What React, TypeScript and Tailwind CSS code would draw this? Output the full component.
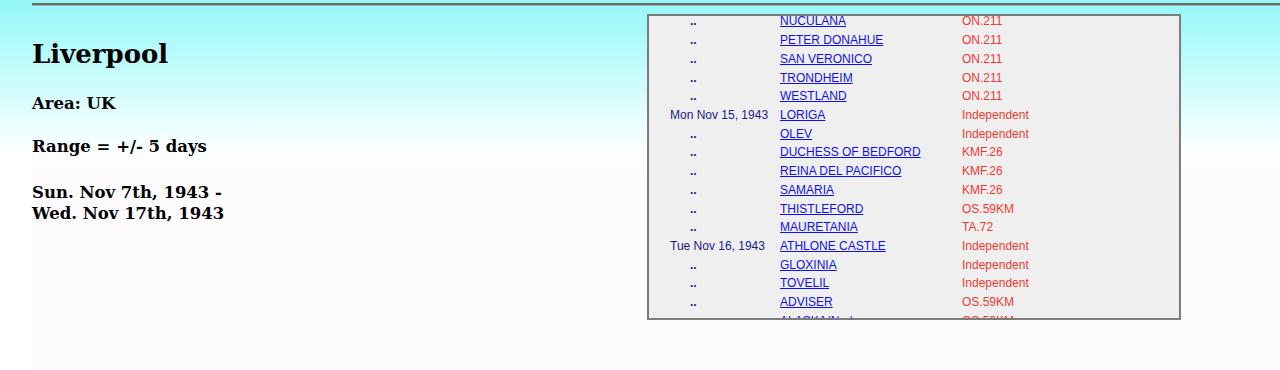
const rows: [string, string, string][] = [
  ["..", "NUCULANA", "ON.211"],
  ["..", "PETER DONAHUE", "ON.211"],
  ["..", "SAN VERONICO", "ON.211"],
  ["..", "TRONDHEIM", "ON.211"],
  ["..", "WESTLAND", "ON.211"],
  ["Mon Nov 15, 1943", "LORIGA", "Independent"],
  ["..", "OLEV", "Independent"],
  ["..", "DUCHESS OF BEDFORD", "KMF.26"],
  ["..", "REINA DEL PACIFICO", "KMF.26"],
  ["..", "SAMARIA", "KMF.26"],
  ["..", "THISTLEFORD", "OS.59KM"],
  ["..", "MAURETANIA", "TA.72"],
  ["Tue Nov 16, 1943", "ATHLONE CASTLE", "Independent"],
  ["..", "GLOXINIA", "Independent"],
  ["..", "TOVELIL", "Independent"],
  ["..", "ADVISER", "OS.59KM"],
  ["..", "ALASKA(Nor)", "OS.59KM"],
];

export default function App() {
  return (
    <div className="min-h-[370px] bg-[linear-gradient(to_bottom,#94f8f9_0px,#ffffff_155px)]">
      <div className="ml-[32px] pt-[3px] min-h-[370px] bg-[linear-gradient(to_bottom,transparent_140px,#fdfbfd_175px)]">
        <div className="h-[3px] bg-[#686868] border-b border-[#a8a8a8]" />

        <div className="flex">
          <div className="w-[615px] font-['DejaVu_Serif',serif] font-bold text-black">
            <h1 className="mt-[31px] text-[26px] leading-[34px]">Liverpool</h1>
            <p className="mt-[22px] text-[16.5px] leading-[22px]">Area: UK</p>
            <p className="mt-[21px] text-[16.5px] leading-[22px]">Range = +/- 5 days</p>
            <p className="mt-[24px] text-[16.5px] leading-[21px]">
              Sun. Nov 7th, 1943 -
              <br />
              Wed. Nov 17th, 1943
            </p>
          </div>

          <div className="mt-[8px] w-[534px] h-[306px] border-2 border-[#7c7c7c] bg-[#efefef] overflow-hidden">
            <div className="-mt-[4px] font-['Liberation_Sans',Arial,sans-serif] text-[12px]">
              {rows.map(([date, ship, convoy], i) => (
                <div key={i} className="flex h-[18.73px] items-center">
                  {date === ".." ? (
                    <span className="w-[131px] pl-[41px] font-bold text-[#1a1a8c]">..</span>
                  ) : (
                    <span className="w-[131px] pl-[21px] text-[#1a1a8c]">{date}</span>
                  )}
                  <a href="#" className="w-[182px] text-[#1010ee] underline">
                    {ship}
                  </a>
                  <span className="text-[#ee3a33]">{convoy}</span>
                </div>
              ))}
            </div>
          </div>
        </div>
      </div>
    </div>
  );
}
